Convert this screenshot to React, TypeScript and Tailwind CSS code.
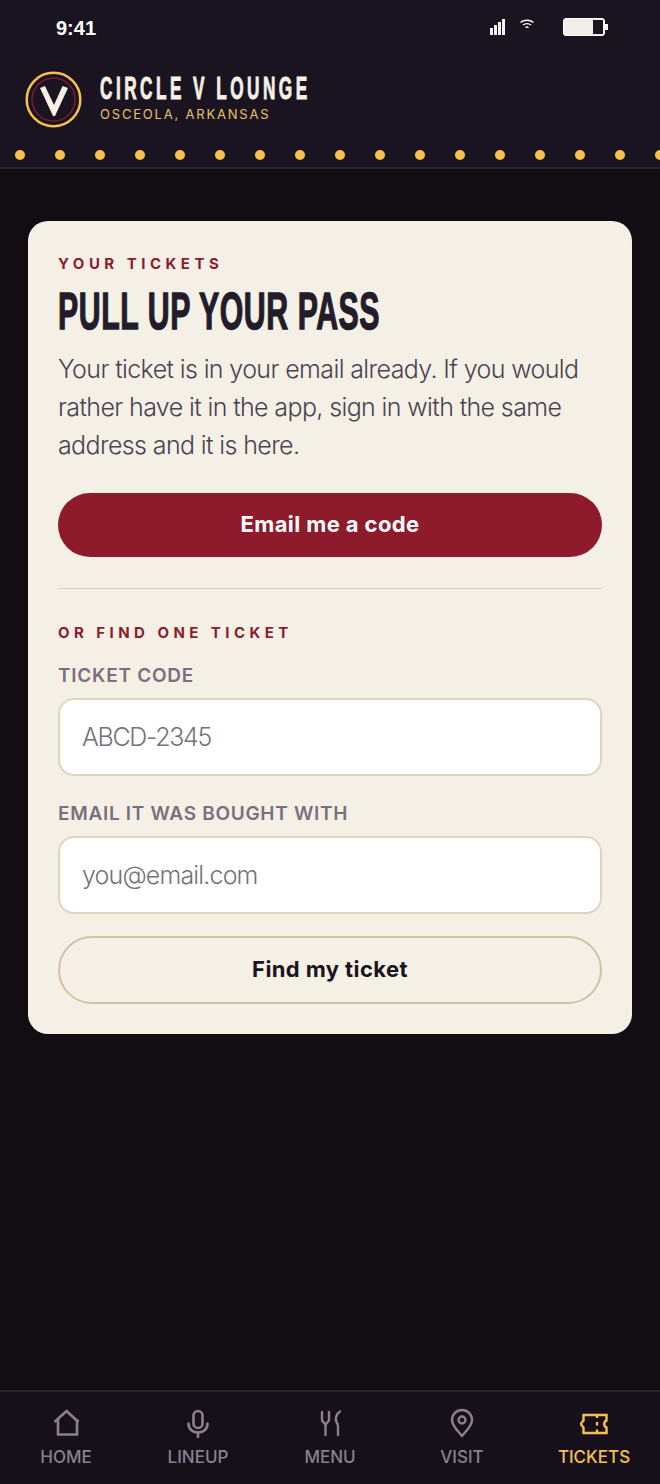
const bodyFont = "font-['Inter','Liberation_Sans',sans-serif]";

function HomeIcon() {
  return (
    <svg width="30" height="30" viewBox="0 0 30 30" fill="none" stroke="currentColor" strokeWidth="2.600">
      <path d="M3.500 14L15.500 3l12 11" />
      <path d="M7 11v15.500h19V11" />
    </svg>
  );
}

function MicIcon() {
  return (
    <svg width="30" height="30" viewBox="0 0 30 30" fill="none" stroke="currentColor" strokeWidth="2.600" strokeLinecap="round">
      <rect x="10.500" y="3" width="9" height="17" rx="4.500" />
      <path d="M5.500 15.500c0 6 4.500 9 9.500 9s9.500-3 9.500-9" />
      <path d="M15 24.500V29" />
    </svg>
  );
}

function MenuIcon() {
  return (
    <svg width="30" height="30" viewBox="0 0 30 30" fill="none" stroke="currentColor" strokeWidth="2.400" strokeLinecap="round">
      <path d="M7 4v8c0 2 3.500 3 3.500 5v10" />
      <path d="M14 4v8c0 2-3.500 3-3.500 5" />
      <path d="M25 3.500c-4 2.500-5 7.500-3.500 10.500 1.500 2 1.500 3 1.500 5v8" />
    </svg>
  );
}

function PinIcon() {
  return (
    <svg width="30" height="30" viewBox="0 0 30 30" fill="none" stroke="currentColor" strokeWidth="2.400">
      <path d="M15 28c-2-3-10-9.500-10-16a10 10 0 0 1 20 0c0 6.500-8 13-10 16z" strokeLinejoin="round" />
      <circle cx="15" cy="12" r="3.500" />
    </svg>
  );
}

function TicketIcon() {
  return (
    <svg width="30" height="30" viewBox="0 0 30 30" fill="none" stroke="currentColor" strokeWidth="2.400">
      <path d="M4.500 7h23v5.500c-3 1-3 6 0 7V25h-23v-5.500C3.500 18 2 17 2 16s1.500-2 2.500-3.500z" />
      <path d="M18 7v3M18 14v3.500M18 21.500V25" />
    </svg>
  );
}

const tabs = [
  { label: 'HOME', icon: <HomeIcon /> },
  { label: 'LINEUP', icon: <MicIcon /> },
  { label: 'MENU', icon: <MenuIcon /> },
  { label: 'VISIT', icon: <PinIcon /> },
  { label: 'TICKETS', icon: <TicketIcon />, active: true },
];

export default function App() {
  return (
    <div className={`w-[660px] h-[1484px] flex flex-col bg-[#120d13] ${bodyFont} overflow-hidden`}>
      {/* Header */}
      <div className="h-[169px] shrink-0 bg-[#1a1420] border-b-2 border-[#2a2430] flex flex-col">
        <div className="h-[56px] flex items-center justify-between pl-[56px] pr-[52px] text-white">
          <span className="text-[20px] font-semibold font-['Liberation_Sans',sans-serif]">9:41</span>
          <div className="flex items-center gap-[14px] -mt-[3px]">
            <svg width="16" height="16" viewBox="0 0 16 16" fill="#f5f3ee"><rect x="0" y="9" width="3" height="7" /><rect x="4" y="6" width="3" height="10" /><rect x="8" y="3" width="3" height="13" /><rect x="12" y="0" width="3" height="16" /></svg>
            <svg width="14" height="10" viewBox="0 0 14 10" fill="none" stroke="white" strokeWidth="1.400" className="-mt-[5px] mr-[15px]"><path d="M.5 3.500c3.500-3 9.500-3 13 0" /><path d="M3 6c2.200-1.800 5.800-1.800 8 0" /><path d="M5.500 8.500c1-.7 2-.7 3 0" /></svg>
            <div className="flex items-center">
              <div className="w-[42px] h-[18px] rounded-[3px] border border-white bg-[#f2efe9] flex justify-end pt-[1px] pr-[1px]"><div className="w-[10px] h-[14px] bg-[#1a1420]" /></div>
              <div className="w-[3px] h-[6px] bg-white" />
            </div>
          </div>
        </div>
        <div className="flex items-center gap-[18px] pl-[25px] h-[88px] pb-[2px]">
          <svg width="57" height="57" viewBox="0 0 57 57" fill="none">
            <circle cx="28.500" cy="28.500" r="26.800" stroke="#f6c14f" strokeWidth="2.500" fill="#1a1420" />
            <circle cx="28.500" cy="28.500" r="21.500" stroke="#7d1a30" strokeWidth="1.500" />
            <polygon points="15,17 20,15 29,34 37.500,15 43,17 30,45 28,45" fill="#f5f0e6" />
          </svg>
          <div className="flex flex-col">
            <span className="h-[30px] origin-left scale-x-[0.556] whitespace-nowrap text-[31px] leading-[26px] font-['Liberation_Sans',sans-serif] font-bold tracking-[6.200px] text-[#f5f0e6] [-webkit-text-stroke:0.9px_#f5f0e6]">CIRCLE V LOUNGE</span>
            <span className="text-[13px] leading-[16px] tracking-[1.800px] text-[#e8c36a]">OSCEOLA, ARKANSAS</span>
          </div>
        </div>
        <div className="flex gap-[30px] pl-[15px] overflow-hidden h-[10px] mt-[6px]">
          {Array.from({ length: 17 }).map((_, i) => (
            <div key={i} className="w-[10px] h-[10px] shrink-0 rounded-full bg-[#f6c14f]" />
          ))}
        </div>
      </div>

      {/* Body */}
      <div className="flex-1 pt-[52px] px-[28px]">
        <div className="bg-[#f5f0e6] rounded-[20px] px-[30px] pt-[34px] pb-[30px]">
          <p className="text-[15px] leading-[18px] font-bold tracking-[4.500px] text-[#8e1b2c]">YOUR TICKETS</p>
          <h2 className="mt-[12px] h-[52px] origin-left scale-x-[0.582] whitespace-nowrap text-[52px] leading-[52px] font-['Liberation_Sans',sans-serif] font-bold tracking-[1px] text-[#231c2b] [-webkit-text-stroke:1.400px_#231c2b]">PULL UP YOUR PASS</h2>
          <p className="mt-[13px] text-[25px] leading-[38px] font-[350] tracking-[-0.620px] text-[#4a4350]">Your ticket is in your email already. If you would rather have it in the app, sign in with the same address and it is here.</p>
          <button className="mt-[28.500px] w-full h-[64px] rounded-full bg-[#8e1b2c] text-white text-[22px] font-bold tracking-[0.400px]">Email me a code</button>
          <div className="mt-[31px] border-t border-[#d9cfb8]" />
          <p className="mt-[35px] text-[15px] leading-[18px] font-bold tracking-[4.450px] text-[#8e1b2c]">OR FIND ONE TICKET</p>
          <p className="mt-[22px] text-[19px] leading-[24px] font-semibold tracking-[0.750px] text-[#7a6f7c]">TICKET CODE</p>
          <div className="mt-[10px] h-[78px] rounded-[16px] border-2 border-[#ddd5c0] bg-white flex items-center px-[22px] pt-[2px] text-[25px] font-[350] tracking-[-1.300px] text-[#77727a]">ABCD-2345</div>
          <p className="mt-[26px] text-[19px] leading-[24px] font-semibold tracking-[0.700px] text-[#7a6f7c]">EMAIL IT WAS BOUGHT WITH</p>
          <div className="mt-[10px] h-[78px] rounded-[16px] border-2 border-[#ddd5c0] bg-white flex items-center px-[22px] pt-[2px] text-[25px] font-[350] tracking-[-0.850px] text-[#77727a]">you@email.com</div>
          <button className="mt-[22px] w-full h-[68px] rounded-full border-2 border-[#cfc2a2] text-[#1a1420] text-[22px] font-bold tracking-[0.400px]">Find my ticket</button>
        </div>
      </div>

      {/* Bottom nav */}
      <div className="h-[94px] shrink-0 bg-[#16101a] border-t-2 border-[#2a2430] grid grid-cols-5">
        {tabs.map((t) => (
          <div key={t.label} className={`flex flex-col items-center pt-[16px] ${t.active ? 'text-[#f6c14f]' : 'text-[#8a8090]'}`}>
            <div className="h-[30px] flex items-center justify-center">{t.icon}</div>
            <span className="mt-[9px] text-[17px] leading-[20px] font-medium">{t.label}</span>
          </div>
        ))}
      </div>
    </div>
  );
}
